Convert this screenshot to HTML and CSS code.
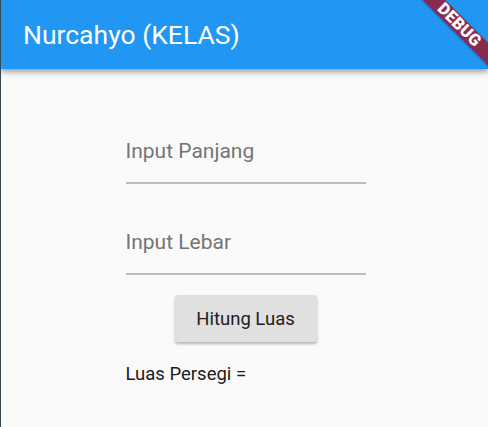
FILE: index.html
```html
<!DOCTYPE html>
<html>
<head>
<meta charset="utf-8">
<link rel="stylesheet" href="styles.css">
</head>
<body>
<div class="app">
  <header class="appbar">
    <h1 class="title">Nurcahyo (KELAS)</h1>
  </header>
  <main class="content">
    <div class="form">
      <div class="field"><span class="hint">Input Panjang</span></div>
      <div class="field"><span class="hint">Input Lebar</span></div>
      <div class="actions"><button class="btn">Hitung Luas</button></div>
      <p class="result">Luas Persegi =</p>
    </div>
  </main>
  <div class="banner"><span>DEBUG</span></div>
</div>
</body>
</html>
```

FILE: styles.css
```css
html, body {
  margin: 0;
  padding: 0;
  width: 488px;
  height: 427px;
  overflow: hidden;
}
body {
  font-family: Roboto, "Liberation Sans", sans-serif;
  background: #fafafa;
}
.app {
  position: relative;
  width: 488px;
  height: 427px;
  border-left: 1px solid #37474f;
  box-sizing: border-box;
  background: #fafafa;
  overflow: hidden;
}
.appbar {
  height: 69px;
  background: #2196f3;
  display: flex;
  align-items: center;
  padding-left: 22px;
  box-shadow: 0 2px 4px rgba(0,0,0,0.2), 0 4px 6px rgba(0,0,0,0.14), 0 1px 10px rgba(0,0,0,0.12);
  position: relative;
  z-index: 1;
}
.title {
  margin: 0;
  color: #fff;
  font-size: 26.5px;
  font-weight: 400;
  letter-spacing: 0;
}
.content {
  display: flex;
  justify-content: center;
  padding-top: 48px;
  padding-left: 2px;
}
.form {
  width: 240px;
  display: flex;
  flex-direction: column;
}
.field {
  height: 91px;
  border-bottom: 2px solid #bdbdbd;
  display: flex;
  align-items: flex-end;
  padding-bottom: 19px;
  box-sizing: border-box;
}
.field:first-child {
  height: 67px;
}
.hint {
  font-size: 21px;
  color: #757575;
}
.actions {
  display: flex;
  justify-content: center;
  padding-top: 20px;
}
.btn {
  width: 142px;
  height: 47px;
  border: none;
  border-radius: 3px;
  background: #e0e0e0;
  color: #212121;
  font-family: Roboto, "Liberation Sans", sans-serif;
  font-size: 18.5px;
  box-shadow: 0 2px 3px rgba(0,0,0,0.28);
  padding: 0;
}
.result {
  margin: 21px 0 0 0;
  font-size: 18.5px;
  color: #1a1a1a;
}
.banner {
  position: absolute;
  width: 110px;
  height: 16px;
  left: 403px;
  top: 17px;
  transform: rotate(45deg);
  background: #892b50;
  display: flex;
  align-items: center;
  justify-content: center;
  z-index: 2;
  box-shadow: 0 1px 2px rgba(0,0,0,0.25);
}
.banner span {
  color: #fff;
  font-family: Roboto, "Liberation Sans", sans-serif;
  font-weight: 900;
  font-size: 16.5px;
  letter-spacing: 0.2px;
  line-height: 16px;
}
```
